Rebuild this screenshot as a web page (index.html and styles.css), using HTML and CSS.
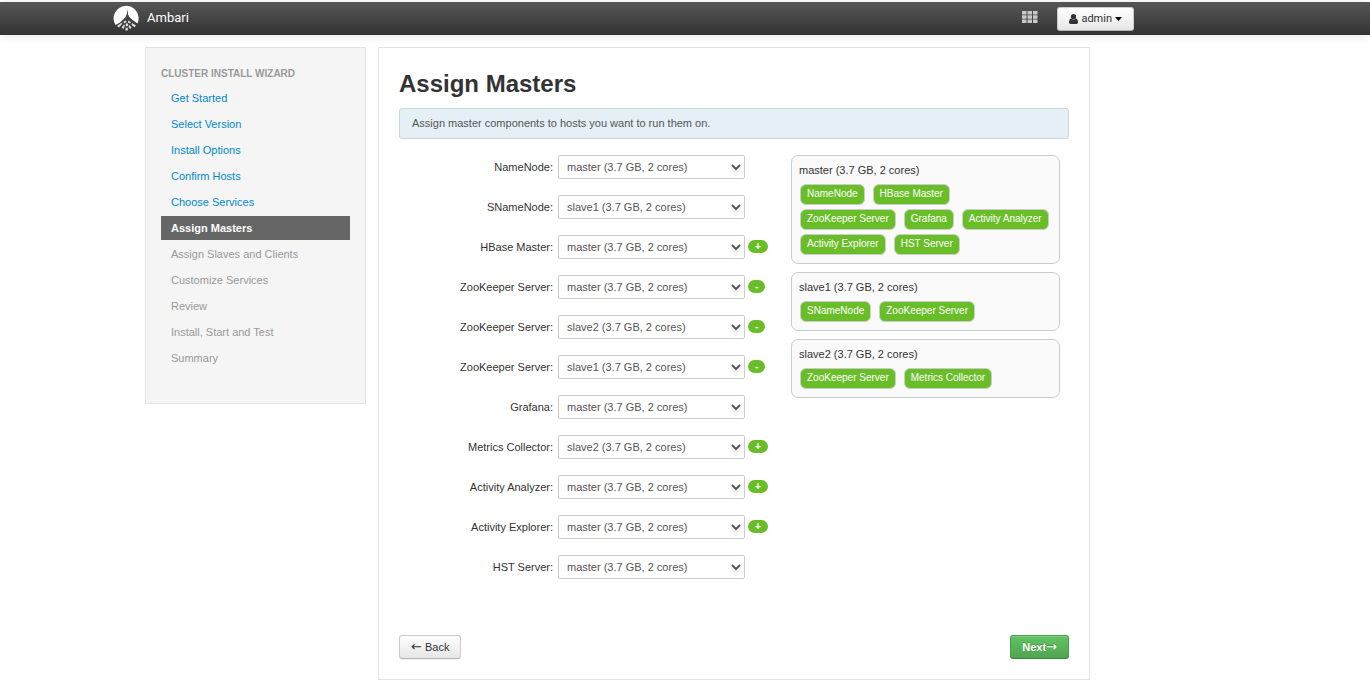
FILE: index.html
```html
<!DOCTYPE html>
<html lang="en">
<head>
<meta charset="utf-8">
<title>Ambari - Assign Masters</title>
<link rel="stylesheet" href="styles.css">
</head>
<body>
<header class="navbar">
  <div class="navbar-inner">
    <a class="brand" href="#">
      <svg class="logo" viewBox="0 0 26 26" aria-hidden="true">
        <path d="M2.500 20A12.500 12.500 0 1 1 24.500 18.500L19 14.500 16 11.500 15 9 14.500 4 13.800 9 12.500 12 10 14.500 7 17.500z" fill="#fff"/>
        <path d="M4 21l4-3 1.500.5-3.500 4zM10.500 16.500l2.500-1 .5 1.500-2.500 1.500zM15 15.500l3 1.500-1 1.500-2-1zM19 18l4 2.500-1.500 1.800-3-2.300zM8.500 22.500l2.500-3 1 1-1.500 3.500zM13 18.500l1.500-.3 1 2-1.500 1.300-1.500-1zM16.500 20l2 2.500-1.500 1.700-1.500-2.200zM12.500 22.800h2.300v2.700h-2.300z" fill="#ddd"/>
      </svg>
      <span>Ambari</span>
    </a>
    <div class="navbar-tools">
      <button class="views" type="button" aria-label="Views">
        <svg viewBox="0 0 16 12" width="16" height="12" fill="#c8c8c8" aria-hidden="true">
          <path d="M0 0h4.500v3.500H0zM5.500 0H10v3.500H5.500zM11 0h4.500v3.500H11zM0 4.300h4.500v3.500H0zM5.500 4.300H10v3.500H5.500zM11 4.300h4.500v3.500H11zM0 8.500h4.500V12H0zM5.500 8.500H10V12H5.500zM11 8.500h4.500V12H11z"/>
        </svg>
      </button>
      <button class="btn user" type="button">
        <svg viewBox="0 0 9 10" width="9" height="10" fill="#333" aria-hidden="true">
          <circle cx="4.500" cy="2.700" r="2.600"/>
          <path d="M2 4.600C.6 5 0 6.400 0 8.300 0 9.400.6 10 1.600 10h5.800C8.400 10 9 9.400 9 8.300 9 6.400 8.400 5 7 4.600c-1.400 1.500-3.600 1.500-5 0z"/>
        </svg>
        <span>admin</span>
        <svg viewBox="0 0 7 4" width="7" height="4" aria-hidden="true"><path d="M0 0h7L3.500 4z"/></svg>
      </button>
    </div>
  </div>
</header>

<div class="page">
  <nav class="wizard">
    <h2 class="wizard-title">CLUSTER INSTALL WIZARD</h2>
    <ul class="steps">
      <li><a class="step" href="#">Get Started</a></li>
      <li><a class="step" href="#">Select Version</a></li>
      <li><a class="step" href="#">Install Options</a></li>
      <li><a class="step" href="#">Confirm Hosts</a></li>
      <li><a class="step" href="#">Choose Services</a></li>
      <li><a class="step active" href="#" aria-current="step">Assign Masters</a></li>
      <li><span class="step disabled">Assign Slaves and Clients</span></li>
      <li><span class="step disabled">Customize Services</span></li>
      <li><span class="step disabled">Review</span></li>
      <li><span class="step disabled">Install, Start and Test</span></li>
      <li><span class="step disabled">Summary</span></li>
    </ul>
  </nav>

  <main class="panel">
    <h1 class="title">Assign Masters</h1>
    <p class="alert">Assign master components to hosts you want to run them on.</p>

    <div class="columns">
      <form class="assignments">
        <div class="row"><label for="c1">NameNode:</label><select id="c1"><option>master (3.7 GB, 2 cores)</option></select></div>
        <div class="row"><label for="c2">SNameNode:</label><select id="c2"><option>slave1 (3.7 GB, 2 cores)</option></select></div>
        <div class="row"><label for="c3">HBase Master:</label><select id="c3"><option>master (3.7 GB, 2 cores)</option></select><button class="pill" type="button">+</button></div>
        <div class="row"><label for="c4">ZooKeeper Server:</label><select id="c4"><option>master (3.7 GB, 2 cores)</option></select><button class="pill" type="button">-</button></div>
        <div class="row"><label for="c5">ZooKeeper Server:</label><select id="c5"><option>slave2 (3.7 GB, 2 cores)</option></select><button class="pill" type="button">-</button></div>
        <div class="row"><label for="c6">ZooKeeper Server:</label><select id="c6"><option>slave1 (3.7 GB, 2 cores)</option></select><button class="pill" type="button">-</button></div>
        <div class="row"><label for="c7">Grafana:</label><select id="c7"><option>master (3.7 GB, 2 cores)</option></select></div>
        <div class="row"><label for="c8">Metrics Collector:</label><select id="c8"><option>slave2 (3.7 GB, 2 cores)</option></select><button class="pill" type="button">+</button></div>
        <div class="row"><label for="c9">Activity Analyzer:</label><select id="c9"><option>master (3.7 GB, 2 cores)</option></select><button class="pill" type="button">+</button></div>
        <div class="row"><label for="c10">Activity Explorer:</label><select id="c10"><option>master (3.7 GB, 2 cores)</option></select><button class="pill" type="button">+</button></div>
        <div class="row"><label for="c11">HST Server:</label><select id="c11"><option>master (3.7 GB, 2 cores)</option></select></div>
      </form>

      <div class="hosts">
        <section class="host">
          <h3 class="host-name">master (3.7 GB, 2 cores)</h3>
          <div class="tags">
            <span class="tag">NameNode</span><span class="tag">HBase Master</span>
            <span class="tag">ZooKeeper Server</span><span class="tag">Grafana</span><span class="tag">Activity Analyzer</span>
            <span class="tag">Activity Explorer</span><span class="tag">HST Server</span>
          </div>
        </section>
        <section class="host">
          <h3 class="host-name">slave1 (3.7 GB, 2 cores)</h3>
          <div class="tags"><span class="tag">SNameNode</span><span class="tag">ZooKeeper Server</span></div>
        </section>
        <section class="host">
          <h3 class="host-name">slave2 (3.7 GB, 2 cores)</h3>
          <div class="tags"><span class="tag">ZooKeeper Server</span><span class="tag">Metrics Collector</span></div>
        </section>
      </div>
    </div>

    <div class="actions">
      <button class="btn" type="button"><span class="arrow">←</span>&nbsp;Back</button>
      <button class="btn success" type="button">Next<span class="arrow">→</span></button>
    </div>
  </main>
</div>
</body>
</html>
```
FILE: styles.css
```css
* { box-sizing: border-box; }

body {
  margin: 0;
  padding-top: 2px;
  background: #fff;
  color: #333;
  font: 11px/18px "Liberation Sans", Arial, sans-serif;
}

button, select { font: inherit; }
h1, h2, h3, p, ul { margin: 0; padding: 0; }
a { color: #08c; text-decoration: none; }

.navbar {
  height: 33px;
  padding-right: 123px;
  border-top: 1px solid #555;
  background: linear-gradient(#555, #333);
  box-shadow: 0 1px 10px rgba(0, 0, 0, .1);
}

.navbar-inner {
  display: flex;
  align-items: center;
  justify-content: space-between;
  max-width: 1021px;
  height: 100%;
  margin: 0 auto;
}

.brand {
  display: flex;
  align-items: center;
  gap: 8px;
  padding-bottom: 2px;
  color: #fff;
  font: 13px/20px Roboto, sans-serif;
}

.logo { width: 26px; height: 26px; }

.navbar-tools { display: flex; align-items: center; gap: 19px; }

.views {
  display: flex;
  margin-bottom: 4px;
  padding: 0;
  border: 0;
  background: none;
}

.btn {
  display: inline-flex;
  align-items: center;
  height: 24px;
  padding: 0 11px;
  border: 1px solid #ccc;
  border-bottom-color: #b3b3b3;
  border-radius: 3px;
  background: linear-gradient(#fff, #e6e6e6);
  color: #333;
  box-shadow: inset 0 1px 0 rgba(255, 255, 255, .2), 0 1px 2px rgba(0, 0, 0, .05);
}

.user {
  gap: 3px;
  font-family: Roboto, sans-serif;
}

.success {
  border-color: #4a9e4a;
  border-bottom-color: #3d853d;
  background: linear-gradient(#62c462, #51a351);
  color: #fff;
  font-weight: bold;
  text-shadow: 0 -1px 0 rgba(0, 0, 0, .25);
}

.arrow { font-family: "DejaVu Sans", sans-serif; font-size: 13px; font-weight: normal; }

.page {
  display: flex;
  align-items: flex-start;
  gap: 12px;
  max-width: 1080px;
  margin: 12px auto 9px;
  padding-right: 135px;
}

.wizard {
  flex: 0 0 221px;
  padding: 16px 15px 33px;
  border: 1px solid #e3e3e3;
  background: #f5f5f5;
}

.wizard-title {
  color: #999;
  font-size: 10px;
  line-height: 20px;
  text-shadow: 0 1px 0 rgba(255, 255, 255, .5);
}

.steps {
  display: flex;
  flex-direction: column;
  gap: 2px;
  padding-top: 2px;
  list-style: none;
}

.step { display: block; padding: 0 10px; line-height: 24px; }
.active { background: #666; color: #fff; font-weight: bold; }
.disabled { color: #999; }

.panel {
  flex: 1;
  min-width: 0;
  padding: 20px;
  border: 1px solid #e3e3e3;
}

.title { font-size: 24px; line-height: 32px; }

.alert {
  margin-top: 8px;
  padding: 6px 12px;
  border: 1px solid #cbd9df;
  border-radius: 3px;
  background: #e4f0f5;
  color: #555;
  line-height: 17px;
}

.columns {
  display: flex;
  align-items: flex-start;
  justify-content: space-between;
  padding: 16px 9px 0 0;
}

.assignments { display: flex; flex-direction: column; gap: 16px; }

.row { display: flex; align-items: center; }
.row label { width: 154px; margin-right: 5px; text-align: right; }

.row select {
  width: 187px;
  height: 24px;
  padding: 0 4px;
  border: 1px solid #ccc;
  border-radius: 2px;
  background-color: #fff;
  color: #555;
}

.pill {
  margin: 0 0 1px 3px;
  padding: 0 7px;
  border: 0;
  border-radius: 7px;
  background: #69be28;
  color: #fff;
  font-size: 10px;
  font-weight: bold;
  line-height: 13px;
}

.hosts { display: flex; flex-direction: column; gap: 8px; width: 269px; }

.host {
  padding: 5px 7px 8px;
  border: 1px solid #ccc;
  border-radius: 7px;
  background: #fafafa;
}

.host-name { font-size: 11px; font-weight: normal; line-height: 18px; }

.tags { display: flex; flex-wrap: wrap; gap: 4px 8px; padding: 5px 1px 0; }

.tag {
  padding: 0 6px 1px;
  border: 1px solid #ccc;
  border-radius: 6px;
  background: #69be28;
  color: #fff;
  font-size: 10px;
  line-height: 18px;
}

.actions { display: flex; justify-content: space-between; padding-top: 56px; }
```
